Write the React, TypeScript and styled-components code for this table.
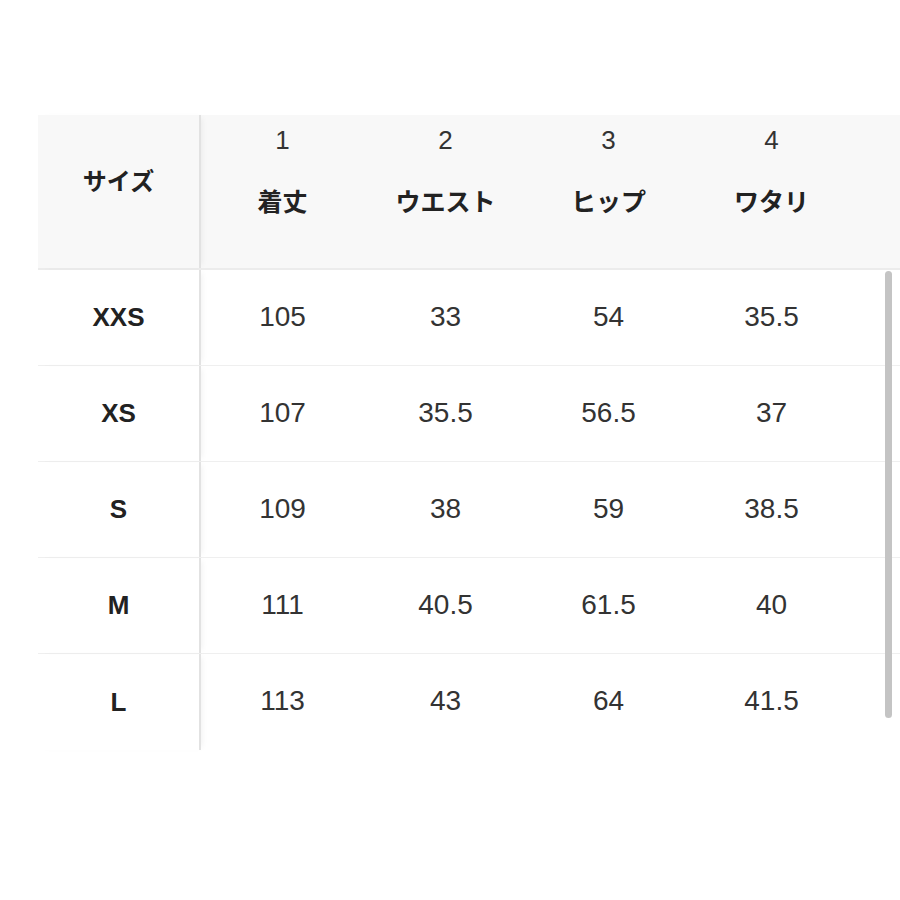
import React from "react";
import styled, { createGlobalStyle } from "styled-components";

const GlobalStyle = createGlobalStyle`
  html, body {
    margin: 0;
    padding: 0;
    background: #ffffff;
  }
  body {
    font-family: "Liberation Sans", "Noto Sans CJK JP", sans-serif;
    color: #333333;
  }
`;

const Page = styled.div`
  width: 900px;
  height: 900px;
  padding: 115px 0 0 38px;
  box-sizing: border-box;
  overflow: hidden;
`;

const TableWrap = styled.div`
  position: relative;
  width: 862px;
`;

const Row = styled.div<{ $head?: boolean; $last?: boolean }>`
  display: grid;
  grid-template-columns: 163px repeat(4, 163px) 1fr;
  height: ${(p) => (p.$head ? "155px" : "96px")};
  background: ${(p) => (p.$head ? "#f8f8f8" : "#ffffff")};
  border-bottom: ${(p) => (p.$last ? "none" : p.$head ? "2px solid #ececec" : "1px solid #efefef")};
  box-sizing: border-box;
`;

const SizeCell = styled.div<{ $head?: boolean }>`
  display: flex;
  align-items: center;
  justify-content: center;
  border-right: 2px solid #e2e2e2;
  box-shadow: 4px 0 6px -3px rgba(0, 0, 0, 0.06);
  font-weight: bold;
  font-size: ${(p) => (p.$head ? "24px" : "26px")};
  font-family: ${(p) => (p.$head ? `"Noto Sans CJK JP", sans-serif` : `"Liberation Sans", sans-serif`)};
  color: #222222;
  padding-bottom: ${(p) => (p.$head ? "24px" : "0")};
  position: relative;
  z-index: 1;
`;

const HeadCell = styled.div`
  display: flex;
  flex-direction: column;
  align-items: center;
  padding-top: 8px;
  gap: 26px;
`;

const ColNum = styled.span`
  font-family: "Liberation Sans", sans-serif;
  font-size: 26px;
  color: #333333;
  line-height: 34px;
`;

const ColLabel = styled.span`
  font-family: "Noto Sans CJK JP", sans-serif;
  font-weight: bold;
  font-size: 25px;
  color: #222222;
  line-height: 34px;
`;

const ValueCell = styled.div`
  display: flex;
  align-items: center;
  justify-content: center;
  font-family: "Liberation Sans", sans-serif;
  font-size: 28px;
  color: #333333;
  padding-bottom: 2px;
`;

const Scrollbar = styled.div`
  position: absolute;
  left: 847px;
  top: 156px;
  width: 7px;
  height: 447px;
  border-radius: 4px;
  background: #c4c4c4;
`;

const columns = [
  { num: "1", label: "着丈" },
  { num: "2", label: "ウエスト" },
  { num: "3", label: "ヒップ" },
  { num: "4", label: "ワタリ" },
];

const rows = [
  { size: "XXS", values: ["105", "33", "54", "35.5"] },
  { size: "XS", values: ["107", "35.5", "56.5", "37"] },
  { size: "S", values: ["109", "38", "59", "38.5"] },
  { size: "M", values: ["111", "40.5", "61.5", "40"] },
  { size: "L", values: ["113", "43", "64", "41.5"] },
];

export default function App() {
  return (
    <>
      <GlobalStyle />
      <Page>
        <TableWrap>
          <Row $head>
            <SizeCell $head>サイズ</SizeCell>
            {columns.map((c) => (
              <HeadCell key={c.num}>
                <ColNum>{c.num}</ColNum>
                <ColLabel>{c.label}</ColLabel>
              </HeadCell>
            ))}
            <div />
          </Row>
          {rows.map((r, i) => (
            <Row key={r.size} $last={i === rows.length - 1}>
              <SizeCell>{r.size}</SizeCell>
              {r.values.map((v, j) => (
                <ValueCell key={j}>{v}</ValueCell>
              ))}
              <div />
            </Row>
          ))}
          <Scrollbar />
        </TableWrap>
      </Page>
    </>
  );
}
